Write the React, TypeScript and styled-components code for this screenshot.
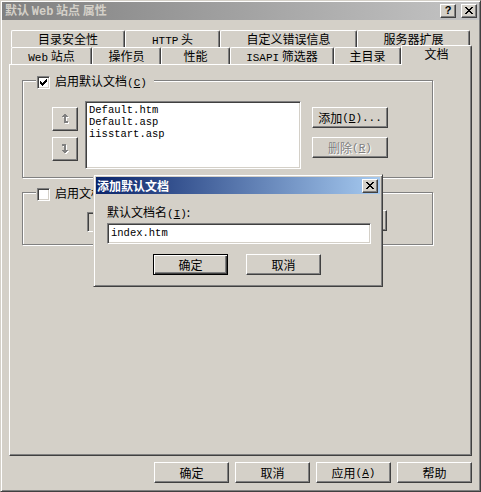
import React from 'react';
import styled, { createGlobalStyle, css } from 'styled-components';

const GlobalStyle = createGlobalStyle`
  html, body {
    margin: 0;
    padding: 0;
    background: #d4d0c8;
  }
  body {
    font-family: "Noto Sans CJK SC", "Liberation Sans", sans-serif;
    font-size: 12px;
    color: #000;
  }
  * {
    box-sizing: border-box;
  }
`;

// classic 3D edges
const raised = css`
  border-top: 1px solid #fff;
  border-left: 1px solid #fff;
  border-right: 1px solid #404040;
  border-bottom: 1px solid #404040;
  box-shadow: inset -1px -1px 0 #808080;
`;

const sunken = css`
  border-top: 1px solid #808080;
  border-left: 1px solid #808080;
  border-right: 1px solid #fff;
  border-bottom: 1px solid #fff;
  box-shadow: inset 1px 1px 0 #404040, inset -1px -1px 0 #d4d0c8;
`;

const frame = css`
  background: #d4d0c8;
  border-top: 1px solid #d4d0c8;
  border-left: 1px solid #d4d0c8;
  border-right: 1px solid #404040;
  border-bottom: 1px solid #404040;
  box-shadow: inset 1px 1px 0 #fff, inset -1px -1px 0 #808080;
`;

const Window = styled.div`
  ${frame};
  position: relative;
  width: 481px;
  height: 492px;
  padding: 1px;
  display: flex;
  flex-direction: column;
`;

const TitleBar = styled.div<{ $active?: boolean }>`
  height: ${p => (p.$active ? 17 : 18)}px;
  display: flex;
  align-items: center;
  justify-content: space-between;
  padding: 0 2px 0 ${p => (p.$active ? 1 : 3)}px;
  background: ${p =>
    p.$active
      ? 'linear-gradient(to right, #0a246a, #a6caf0)'
      : 'linear-gradient(to right, #808080, #c4c4c4)'};
`;

const TitleText = styled.span<{ $active?: boolean }>`
  font-weight: bold;
  font-size: 12px;
  line-height: 14px;
  color: ${p => (p.$active ? '#fff' : '#d4d0c8')};
  white-space: nowrap;
`;

const CaptionButtons = styled.div`
  display: flex;
  gap: 5px;
`;

const CaptionButton = styled.div`
  ${raised};
  width: 16px;
  height: 14px;
  background: #d4d0c8;
  display: flex;
  align-items: center;
  justify-content: center;
  font-family: "Liberation Sans", sans-serif;
  font-weight: bold;
  font-size: 11px;
  line-height: 1;
  color: #000;
  padding-bottom: 1px;
`;

const Body = styled.div`
  padding: 10px 7px 0 7px;
  display: flex;
  flex-direction: column;
`;

const TabRow = styled.div`
  display: flex;
  height: 17px;
  padding-left: 2px;
  align-items: flex-start;
`;

const Tab = styled.div<{ $width: number; $selected?: boolean }>`
  width: ${p => p.$width}px;
  height: ${p => (p.$selected ? 20 : 17)}px;
  margin-top: ${p => (p.$selected ? -2 : 0)}px;
  position: relative;
  z-index: ${p => (p.$selected ? 1 : 0)};
  background: #d4d0c8;
  border-top: 1px solid #fff;
  border-left: 1px solid #fff;
  border-right: 1px solid #404040;
  border-radius: 2px 2px 0 0;
  box-shadow: inset -1px 0 0 #808080;
  text-align: center;
  line-height: ${p => (p.$selected ? 16 : 15)}px;
  white-space: nowrap;
`;

const Panel = styled.div`
  width: 463px;
  height: 392px;
  border-top: 1px solid #fff;
  border-left: 1px solid #fff;
  border-right: 1px solid #404040;
  border-bottom: 1px solid #404040;
  box-shadow: inset -1px -1px 0 #808080;
  padding: 15px 0 0 12px;
  display: flex;
  flex-direction: column;
  gap: 14px;
`;

const GroupBox = styled.div<{ $height: number }>`
  position: relative;
  width: 411px;
  height: ${p => p.$height}px;
  border: 1px solid #808080;
  box-shadow: inset 1px 1px 0 #fff, 1px 1px 0 #fff;
`;

const GroupCaption = styled.div`
  position: absolute;
  top: -7px;
  left: 13px;
  display: flex;
  align-items: center;
  gap: 5px;
  padding: 0 7px 0 1px;
  background: #d4d0c8;
  line-height: 13px;
  white-space: nowrap;
`;

const CheckBox = styled.div`
  ${sunken};
  width: 13px;
  height: 13px;
  background: #fff;
  display: flex;
  align-items: center;
  justify-content: center;
`;

const GroupRow = styled.div<{ $top: number; $left: number }>`
  display: flex;
  align-items: flex-start;
  padding: ${p => p.$top}px 0 0 ${p => p.$left}px;
`;

const ArrowColumn = styled.div`
  display: flex;
  flex-direction: column;
  gap: 6px;
  margin-top: 6px;
`;

const ArrowButton = styled.div`
  ${raised};
  width: 26px;
  height: 24px;
  background: #d4d0c8;
  display: flex;
  align-items: center;
  justify-content: center;
`;

const ListBox = styled.div`
  ${sunken};
  width: 216px;
  height: 68px;
  margin-left: 7px;
  background: #fff;
  padding: 2px 0 0 3px;
`;

const ListItem = styled.div`
  font-family: "Liberation Mono", monospace;
  font-size: 10.5px;
  line-height: 12px;
  white-space: nowrap;
`;

const SideColumn = styled.div`
  display: flex;
  flex-direction: column;
  gap: 9px;
  margin: 6px 0 0 11px;
`;

const PushButton = styled.div<{ $width?: number; $default?: boolean; $disabled?: boolean }>`
  width: ${p => p.$width ?? 75}px;
  height: 21px;
  background: #d4d0c8;
  display: flex;
  align-items: center;
  justify-content: center;
  white-space: nowrap;
  line-height: 14px;
  color: ${p => (p.$disabled ? '#808080' : '#000')};
  text-shadow: ${p => (p.$disabled ? '1px 1px 0 #fff' : 'none')};
  ${p =>
    p.$default
      ? css`
          border: 1px solid #000;
          box-shadow: inset 1px 1px 0 #fff, inset -1px -1px 0 #404040, inset -2px -2px 0 #808080;
        `
      : raised};
`;

const Field = styled.div<{ $width: number }>`
  ${sunken};
  width: ${p => p.$width}px;
  height: 20px;
  margin-top: 2px;
  background: #d4d0c8;
`;

const ButtonBar = styled.div`
  display: flex;
  justify-content: flex-end;
  gap: 6px;
  margin-top: 6px;
`;

const Modal = styled.div`
  ${frame};
  position: absolute;
  left: 92px;
  top: 173px;
  width: 290px;
  height: 113px;
  padding: 2px;
  z-index: 5;
`;

const ModalBody = styled.div`
  padding: 11px 0 0 11px;
  display: flex;
  flex-direction: column;
`;

const FieldLabel = styled.div`
  line-height: 14px;
  white-space: nowrap;
`;

const TextInput = styled.div`
  ${sunken};
  width: 264px;
  height: 21px;
  margin-top: 2px;
  background: #fff;
  padding: 3px 0 0 3px;
  font-family: "Liberation Mono", monospace;
  font-size: 10.5px;
  line-height: 13px;
`;

const ModalButtons = styled.div`
  display: flex;
  gap: 18px;
  margin: 10px 0 0 46px;
`;

const Mono = styled.span`
  font-family: "Liberation Mono", monospace;
  font-size: 11px;
`;

const Key = ({ k }: { k: string }) => (
  <Mono>
    (<u>{k}</u>)
  </Mono>
);

// small bitmap glyphs, '#' marks a lit pixel
function Glyph({ rows, color, shadow }: { rows: string[]; color: string; shadow?: string }) {
  const w = rows[0].length + (shadow ? 1 : 0);
  const h = rows.length + (shadow ? 1 : 0);
  const cells: React.ReactElement[] = [];
  const layers = shadow ? [{ c: shadow, d: 1 }, { c: color, d: 0 }] : [{ c: color, d: 0 }];
  layers.forEach(({ c, d }) =>
    rows.forEach((row, y) =>
      row.split('').forEach((ch, x) => {
        if (ch === '#') cells.push(<rect key={`${d}-${x}-${y}`} x={x + d} y={y + d} width={1} height={1} fill={c} />);
      })
    )
  );
  return (
    <svg width={w} height={h} viewBox={`0 0 ${w} ${h}`} shapeRendering="crispEdges">
      {cells}
    </svg>
  );
}

const CHECK = ['......#', '.....##', '#...###', '##.###.', '#####..', '.###...', '..#....'];
const CROSS = ['##....##', '.##..##.', '..####..', '...##...', '..####..', '.##..##.', '##....##'];
const UP = ['...##...', '..####..', '.######.', '...##...', '...##...', '...##...', '...##...', '...####.', '...####.'];
const DOWN = ['.####...', '.####...', '...##...', '...##...', '...##...', '...##...', '.######.', '..####..', '...##...'];

const Checked = () => <Glyph rows={CHECK} color="#000" />;

export default function App() {
  return (
    <>
      <GlobalStyle />
      <Window>
        <TitleBar>
          <TitleText>
            默认 <Mono style={{ fontSize: '12px' }}>Web</Mono> 站点 属性
          </TitleText>
          <CaptionButtons>
            <CaptionButton>?</CaptionButton>
            <CaptionButton>
              <Glyph rows={CROSS} color="#000" />
            </CaptionButton>
          </CaptionButtons>
        </TitleBar>

        <Body>
          <TabRow>
            <Tab $width={114}>目录安全性</Tab>
            <Tab $width={95}>
              <Mono>HTTP</Mono> 头
            </Tab>
            <Tab $width={137}>自定义错误信息</Tab>
            <Tab $width={113}>服务器扩展</Tab>
          </TabRow>
          <TabRow>
            <Tab $width={81}>
              <Mono>Web</Mono> 站点
            </Tab>
            <Tab $width={69}>操作员</Tab>
            <Tab $width={69}>性能</Tab>
            <Tab $width={104}>
              <Mono>ISAPI</Mono> 筛选器
            </Tab>
            <Tab $width={67}>主目录</Tab>
            <Tab $width={71} $selected>
              文档
            </Tab>
          </TabRow>

          <Panel>
            <GroupBox $height={98}>
              <GroupCaption>
                <CheckBox>
                  <Checked />
                </CheckBox>
                <span>
                  启用默认文档<Key k="C" />
                </span>
              </GroupCaption>
              <GroupRow $top={20} $left={29}>
                <ArrowColumn>
                  <ArrowButton>
                    <Glyph rows={UP} color="#808080" shadow="#fff" />
                  </ArrowButton>
                  <ArrowButton>
                    <Glyph rows={DOWN} color="#808080" shadow="#fff" />
                  </ArrowButton>
                </ArrowColumn>
                <ListBox>
                  <ListItem>Default.htm</ListItem>
                  <ListItem>Default.asp</ListItem>
                  <ListItem>iisstart.asp</ListItem>
                </ListBox>
                <SideColumn>
                  <PushButton $width={76}>
                    添加<Key k="D" />
                    <Mono>...</Mono>
                  </PushButton>
                  <PushButton $width={76} $disabled>
                    删除<Key k="R" />
                  </PushButton>
                </SideColumn>
              </GroupRow>
            </GroupBox>

            <GroupBox $height={53}>
              <GroupCaption>
                <CheckBox />
                <span>
                  启用文档页脚<Key k="O" />
                </span>
              </GroupCaption>
              <GroupRow $top={17} $left={64}>
                <Field $width={212} />
                <PushButton $width={75} $disabled style={{ marginLeft: 13 }}>
                  浏览<Key k="B" />
                  <Mono>...</Mono>
                </PushButton>
              </GroupRow>
            </GroupBox>
          </Panel>

          <ButtonBar>
            <PushButton>确定</PushButton>
            <PushButton>取消</PushButton>
            <PushButton>
              应用<Key k="A" />
            </PushButton>
            <PushButton>帮助</PushButton>
          </ButtonBar>
        </Body>

        <Modal>
          <TitleBar $active>
            <TitleText $active>添加默认文档</TitleText>
            <CaptionButton>
              <Glyph rows={CROSS} color="#000" />
            </CaptionButton>
          </TitleBar>
          <ModalBody>
            <FieldLabel>
              默认文档名<Key k="I" />:
            </FieldLabel>
            <TextInput>index.htm</TextInput>
            <ModalButtons>
              <PushButton $default>确定</PushButton>
              <PushButton>取消</PushButton>
            </ModalButtons>
          </ModalBody>
        </Modal>
      </Window>
    </>
  );
}
